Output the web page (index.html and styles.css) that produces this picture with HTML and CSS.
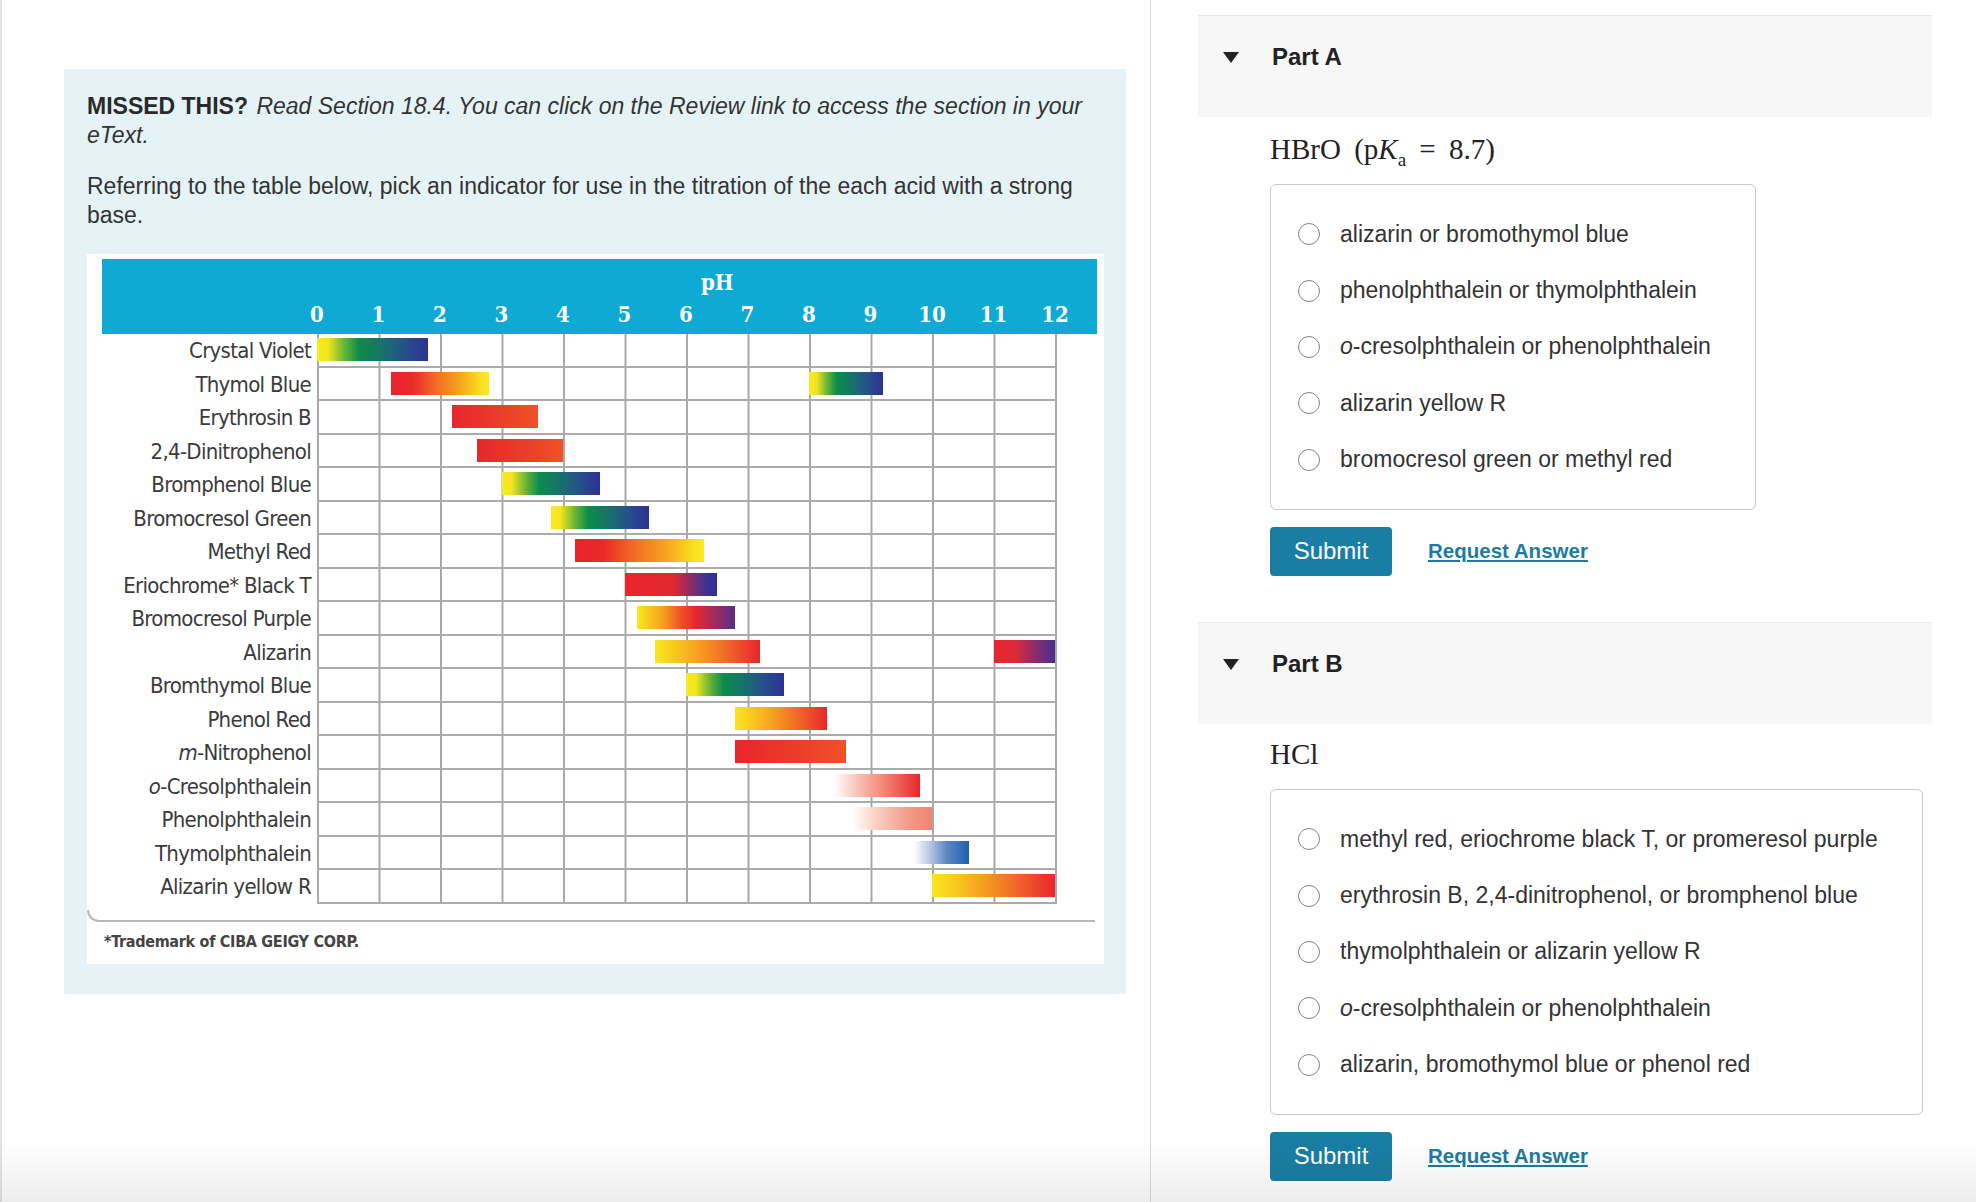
FILE: index.html
```html
<html>
<head>
<link rel="stylesheet" href="styles.css">
  <title>Titration indicators</title>
</head>
<body>
<div class="page">

  <div class="left">
    <div class="review">
      <p class="intro"><b>MISSED THIS?</b> <i>Read Section 18.4. You can click on the Review link to access the section in your</i> <i>eText.</i></p>
      <p class="intro">Referring to the table below, pick an indicator for use in the titration of the each acid with a strong base.</p>

      <div class="figure">
        <div class="chart-head">
          <div class="ph-title">pH</div>
          <div class="ph-scale">
            <span>0</span><span>1</span><span>2</span><span>3</span><span>4</span><span>5</span><span>6</span>
            <span>7</span><span>8</span><span>9</span><span>10</span><span>11</span><span>12</span>
          </div>
        </div>

        <!-- bars use grid columns of 0.1 pH: start = pH*10+1 -->
        <div class="chart-row">
          <div class="chart-label">Crystal Violet</div>
          <div class="chart-track"><span class="bar g-ygb" style="grid-column: 1 / 19"></span></div>
        </div>
        <div class="chart-row">
          <div class="chart-label">Thymol Blue</div>
          <div class="chart-track">
            <span class="bar g-roy" style="grid-column: 13 / 29"></span>
            <span class="bar g-ygb" style="grid-column: 81 / 93"></span>
          </div>
        </div>
        <div class="chart-row">
          <div class="chart-label">Erythrosin B</div>
          <div class="chart-track"><span class="bar g-rr" style="grid-column: 23 / 37"></span></div>
        </div>
        <div class="chart-row">
          <div class="chart-label">2,4-Dinitrophenol</div>
          <div class="chart-track"><span class="bar g-rr" style="grid-column: 27 / 41"></span></div>
        </div>
        <div class="chart-row">
          <div class="chart-label">Bromphenol Blue</div>
          <div class="chart-track"><span class="bar g-ygb" style="grid-column: 31 / 47"></span></div>
        </div>
        <div class="chart-row">
          <div class="chart-label">Bromocresol Green</div>
          <div class="chart-track"><span class="bar g-ygb" style="grid-column: 39 / 55"></span></div>
        </div>
        <div class="chart-row">
          <div class="chart-label">Methyl Red</div>
          <div class="chart-track"><span class="bar g-roy" style="grid-column: 43 / 64"></span></div>
        </div>
        <div class="chart-row">
          <div class="chart-label">Eriochrome* Black T</div>
          <div class="chart-track"><span class="bar g-rb" style="grid-column: 51 / 66"></span></div>
        </div>
        <div class="chart-row">
          <div class="chart-label">Bromocresol Purple</div>
          <div class="chart-track"><span class="bar g-yrp" style="grid-column: 53 / 69"></span></div>
        </div>
        <div class="chart-row">
          <div class="chart-label">Alizarin</div>
          <div class="chart-track">
            <span class="bar g-yor" style="grid-column: 56 / 73"></span>
            <span class="bar g-rp" style="grid-column: 111 / 121"></span>
          </div>
        </div>
        <div class="chart-row">
          <div class="chart-label">Bromthymol Blue</div>
          <div class="chart-track"><span class="bar g-ygb" style="grid-column: 61 / 77"></span></div>
        </div>
        <div class="chart-row">
          <div class="chart-label">Phenol Red</div>
          <div class="chart-track"><span class="bar g-yor" style="grid-column: 69 / 84"></span></div>
        </div>
        <div class="chart-row">
          <div class="chart-label"><i>m</i>-Nitrophenol</div>
          <div class="chart-track"><span class="bar g-rr" style="grid-column: 69 / 87"></span></div>
        </div>
        <div class="chart-row">
          <div class="chart-label"><i>o</i>-Cresolphthalein</div>
          <div class="chart-track"><span class="bar g-pink" style="grid-column: 85 / 99"></span></div>
        </div>
        <div class="chart-row">
          <div class="chart-label">Phenolphthalein</div>
          <div class="chart-track"><span class="bar g-salmon" style="grid-column: 88 / 101"></span></div>
        </div>
        <div class="chart-row">
          <div class="chart-label">Thymolphthalein</div>
          <div class="chart-track"><span class="bar g-blue" style="grid-column: 98 / 107"></span></div>
        </div>
        <div class="chart-row">
          <div class="chart-label">Alizarin yellow R</div>
          <div class="chart-track"><span class="bar g-yor" style="grid-column: 101 / 121"></span></div>
        </div>

        <div class="figure-rule"></div>
        <div class="figure-note">*Trademark of CIBA GEIGY CORP.</div>
      </div>
    </div>
  </div>

  <div class="right">
    <!-- Part A -->
    <div class="part-head"><span class="caret"></span>Part A</div>
    <div class="part-body">
      <div class="question">HBrO <span class="paren">(p<i>K</i><sub>a</sub> <span class="eq">=</span> 8.7)</span></div>
      <div class="choices">
        <label class="choice"><input type="radio" name="parta"> alizarin or bromothymol blue</label>
        <label class="choice"><input type="radio" name="parta"> phenolphthalein or thymolphthalein</label>
        <label class="choice"><input type="radio" name="parta"> <span><i>o</i>-cresolphthalein or phenolphthalein</span></label>
        <label class="choice"><input type="radio" name="parta"> alizarin yellow R</label>
        <label class="choice"><input type="radio" name="parta"> bromocresol green or methyl red</label>
      </div>
      <div class="actions">
        <button class="submit" type="button">Submit</button>
        <a class="request" href="#">Request Answer</a>
      </div>
    </div>

    <!-- Part B -->
    <div class="part-head part-b"><span class="caret"></span>Part B</div>
    <div class="part-body part-body-b">
      <div class="question">HCl</div>
      <div class="choices">
        <label class="choice"><input type="radio" name="partb"> methyl red, eriochrome black T, or promeresol purple</label>
        <label class="choice"><input type="radio" name="partb"> erythrosin B, 2,4-dinitrophenol, or bromphenol blue</label>
        <label class="choice"><input type="radio" name="partb"> thymolphthalein or alizarin yellow R</label>
        <label class="choice"><input type="radio" name="partb"> <span><i>o</i>-cresolphthalein or phenolphthalein</span></label>
        <label class="choice"><input type="radio" name="partb"> alizarin, bromothymol blue or phenol red</label>
      </div>
      <div class="actions">
        <button class="submit" type="button">Submit</button>
        <a class="request" href="#">Request Answer</a>
      </div>
    </div>
  </div>

</div>
<div class="bottom-shade"></div>
</body>
</html>
```

FILE: styles.css
```css
/* page layout */
* {box-sizing: border-box;}

body {
  margin: 0;
  background: #fff;
  font-family: "Liberation Sans", Arial, Helvetica, sans-serif;
  color: #333;
}

.page {
  display: flex;
  min-height: 1202px;
}

.left {
  width: 1151px;
  flex: none;
  border-left: 2px solid #e4e4e4;
  border-right: 1px solid #dadada;
}

.right {
  flex: 1;
}

/* review panel */
.review {
  margin: 69px 0 0 62px;
  width: 1062px;
  background-color: #e5f3f6;
  padding: 23px 22px 30px 23px;
}

.intro {
  margin: 0 0 22px 0;
  font-size: 23px;
  line-height: 29px;
  color: #333;
}

.intro b {color: #2a2a2a; margin-right: 2px;}

/* figure (indicator chart) */
.figure {
  margin-top: 24px;
  background: #fff;
  padding: 5px 7px 0 0;
  height: 710px;
}

.chart-head {
  margin-left: 15px;
  height: 75px;
  background-color: #0eaad4;
  color: #fff;
  padding-top: 10px;
  font-family: "DejaVu Serif", "Liberation Serif", serif;
  font-weight: bold;
  font-stretch: condensed;
  font-size: 22px;
  line-height: 26px;
}

.ph-title {
  padding-left: 599px;
}

.ph-scale {
  display: grid;
  grid-template-columns: repeat(13, 61.5px);
  margin: 6px 0 0 184.25px;
  text-align: center;
}

.chart-row {
  display: grid;
  grid-template-columns: 215px 740px;
  margin-left: 15px;
  height: 33.5px;
}

.chart-label {
  text-align: right;
  padding-right: 6px;
  font-family: "DejaVu Sans Condensed", "Liberation Sans", sans-serif;
  font-stretch: condensed;
  font-size: 22px;
  letter-spacing: -0.7px;
  line-height: 33px;
  color: #3b3b3b;
  white-space: nowrap;
}

.chart-track {
  display: grid;
  grid-template-columns: repeat(120, 1fr);
  padding-right: 2px;
  border-bottom: 2px solid #ababab;
  background-image: linear-gradient(to right, #a8a8a8 2px, transparent 2px);
  background-size: 61.5px 100%;
  align-items: center;
}

.bar {
  grid-row: 1;
  height: 23px;
}

.g-ygb {background: linear-gradient(to right, #f9ec1e 0%, #f2e420 10%, #6cb637 24%, #0b8c4b 38%, #15746a 58%, #24528a 78%, #2e3192 100%);}
.g-roy {background: linear-gradient(to right, #e8242b 0%, #e92a2a 22%, #f26a24 45%, #f7a31d 70%, #f9e01f 92%, #faea23 100%);}
.g-yor {background: linear-gradient(to right, #f9e61f 0%, #f8c41d 22%, #f58e22 50%, #ef5a28 75%, #e8262b 100%);}
.g-rr {background: linear-gradient(to right, #e8262b 0%, #eb3a2a 50%, #ef5228 100%);}
.g-rb {background: linear-gradient(to right, #e8262b 0%, #e4282f 52%, #8c2c6a 72%, #3d3394 88%, #2e3192 100%);}
.g-yrp {background: linear-gradient(to right, #f9e81e 0%, #f7a51f 25%, #ee5128 45%, #e7262d 60%, #a62b5e 78%, #572d88 100%);}
.g-rp {background: linear-gradient(to right, #e8262b 0%, #df283b 35%, #7b2d78 75%, #4a2e8b 100%);}
.g-pink {background: linear-gradient(to right, #fff 0%, #f9c6bc 25%, #f3826f 60%, #e8262b 100%);}
.g-salmon {background: linear-gradient(to right, #fff 0%, #f9d0c4 30%, #f39b89 70%, #f08470 100%);}
.g-blue {background: linear-gradient(to right, #fff 0%, #c0cee8 25%, #5e87c3 60%, #1d5fad 100%);}

.figure-rule {
  margin-top: 6px;
  height: 12px;
  width: 1008px;
  border-left: 2px solid #b9b9b9;
  border-bottom: 2px solid #b9b9b9;
  border-bottom-left-radius: 12px;
}

.figure-note {
  padding: 8px 0 0 17px;
  font-family: "DejaVu Sans Condensed", "Liberation Sans", sans-serif;
  font-stretch: condensed;
  font-weight: bold;
  font-size: 16px;
  letter-spacing: -0.3px;
  line-height: 24px;
  color: #444;
}

/* question parts */
.part-head {
  display: flex;
  margin: 15px 44px 0 47px;
  height: 102px;
  align-items: flex-start;
  padding: 26px 0 0 25px;
  background-color: #f7f7f7;
  border-top: 1px solid #e8e8e8;
  font-size: 24px;
  line-height: 30px;
  font-weight: bold;
  color: #222;
}

.part-head.part-b {
  margin-top: 46px;
}

.caret {
  width: 0;
  height: 0;
  margin: 10px 33px 0 0;
  border-left: 8.5px solid transparent;
  border-right: 8.5px solid transparent;
  border-top: 11px solid #222;
}

.part-body {
  margin-left: 119px;
}

.question {
  margin-top: 14px;
  font-family: "Liberation Serif", "Times New Roman", serif;
  font-size: 29px;
  line-height: 36px;
  color: #222;
}

.part-body-b .question {margin-top: 12px;}

.question .paren {margin-left: 6px;}
.question sub {font-size: 19px; line-height: 0;}
.question .eq {margin: 0 6px;}

.choices {
  width: fit-content;
  margin-top: 17px;
  padding: 21px 44px 21px 27px;
  border: 1.5px solid #cacaca;
  border-radius: 6px;
}

.choice {
  display: flex;
  align-items: center;
  gap: 20px;
  height: 56.4px;
  font-size: 23px;
  color: #333;
  white-space: nowrap;
}

.choice input {
  appearance: none;
  -webkit-appearance: none;
  margin: 0;
  width: 22px;
  height: 22px;
  flex: none;
  border: 1.5px solid #858585;
  border-radius: 50%;
  background: #fff;
}

.actions {
  display: flex;
  align-items: center;
  margin-top: 17px;
}

.submit {
  width: 122px;
  height: 49px;
  padding: 0;
  border: none;
  border-radius: 4px;
  background-color: #1a7ea3;
  color: #fff;
  font-family: "Liberation Sans", Arial, sans-serif;
  font-size: 24px;
}

.request {
  margin-left: 36px;
  font-size: 20.5px;
  font-weight: bold;
  color: #1e7ba0;
  text-decoration: underline;
}

.bottom-shade {
  position: fixed;
  left: 0;
  right: 0;
  bottom: 0;
  height: 60px;
  pointer-events: none;
  background: linear-gradient(to bottom, rgba(0,0,0,0) 0%, rgba(0,0,0,0.035) 50%, rgba(0,0,0,0.07) 100%);
}
```
